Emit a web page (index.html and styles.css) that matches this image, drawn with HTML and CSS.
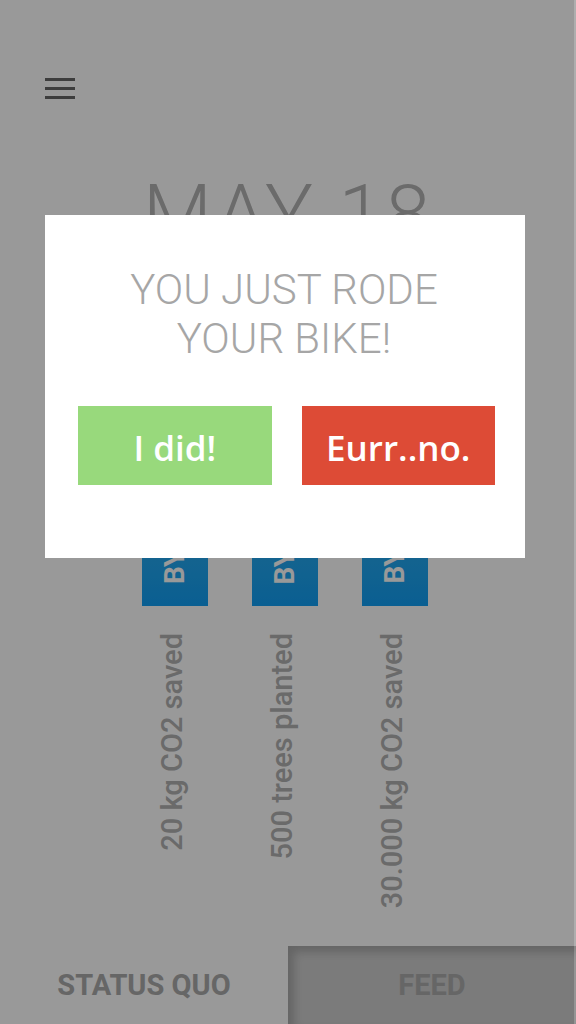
FILE: index.html
```html
<!DOCTYPE html>
<html lang="en">
<head>
    <meta charset="UTF-8">
    <meta name="viewport" content="width=device-width, initial-scale=1.0">
    <title>Bike Tracker</title>
    <link rel="stylesheet" href="styles.css">
</head>
<body>
    <div class="app">
        <header class="top">
            <div class="menu">
                <span></span><span></span><span></span>
            </div>
        </header>
        <h1 class="date">MAY 18</h1>

        <div class="stats">
            <div class="stat">
                <div class="bar"><span>BY BIKE</span></div>
                <div class="label">20 kg CO2 saved</div>
            </div>
            <div class="stat">
                <div class="bar"><span>BY TREE</span></div>
                <div class="label">500 trees planted</div>
            </div>
            <div class="stat">
                <div class="bar"><span>BY ALL</span></div>
                <div class="label">30.000 kg CO2 saved</div>
            </div>
        </div>

        <nav class="tabs">
            <div class="tab">STATUS QUO</div>
            <div class="tab tab-off">FEED</div>
        </nav>
    </div>

    <!-- popup -->
    <div class="overlay">
        <div class="modal">
            <h2 class="modal-title">YOU JUST RODE<br>YOUR BIKE!</h2>
            <div class="actions">
                <button class="btn btn-yes">I did!</button>
                <button class="btn btn-no">Eurr..no.</button>
            </div>
        </div>
    </div>
</body>
</html>
```

FILE: styles.css
```css
body {
    margin: 0;
    padding: 0;
    background: #fff;
    font-family: Roboto, "Liberation Sans", sans-serif;
    overflow: hidden;
}
.app {
    height: 1024px;
    display: flex;
    flex-direction: column;
}
.top {
    padding: 78px 45px 0;
}
.menu {
    width: 30px;
    display: flex;
    flex-direction: column;
    gap: 6px;
}
.menu span {
    display: block;
    height: 3px;
    background: #666;
}
.date {
    margin: 75px 0 0;
    text-align: center;
    font-size: 80px;
    line-height: 80px;
    font-weight: 300;
    letter-spacing: 3px;
    color: #b2b2b2;
}
.stats {
    margin-top: 202px;
    padding-left: 142px;
    display: flex;
    gap: 44px;
    align-items: flex-start;
}
.stat {
    width: 66px;
    display: flex;
    flex-direction: column;
    align-items: center;
}
.bar {
    width: 66px;
    height: 150px;
    background: linear-gradient(to bottom, #46b7e6, #119ef3);
    display: flex;
    justify-content: center;
    align-items: flex-end;
    overflow: hidden;
}
.bar span {
    writing-mode: vertical-rl;
    transform: rotate(180deg);
    color: #fff;
    font-size: 28px;
    font-weight: 700;
    line-height: 1;
    padding-top: 22px;
    white-space: nowrap;
}
.label {
    margin-top: 27px;
    margin-right: 6px;
    writing-mode: vertical-rl;
    transform: rotate(180deg);
    font-size: 29px;
    font-weight: 500;
    line-height: 1.2;
    color: #b1b1b1;
    white-space: nowrap;
}
.tabs {
    margin-top: auto;
    height: 78px;
    display: flex;
}
.tab {
    flex: 1;
    display: flex;
    justify-content: center;
    align-items: center;
    font-size: 29px;
    font-weight: 700;
    color: #aaa;
}
.tab-off {
    background: #cdcdcd;
    box-shadow: inset 6px 6px 8px rgba(0, 0, 0, 0.18);
}
.overlay {
    position: fixed;
    top: 0;
    left: 0;
    right: 0;
    bottom: 0;
    background: rgba(0, 0, 0, 0.4);
    border-right: 2px solid rgba(255, 255, 255, 0.2);
}
.modal {
    margin: 215px 0 0 45px;
    width: 480px;
    box-sizing: border-box;
    padding: 50px 30px 73px 33px;
    background: #fff;
}
.modal-title {
    margin: 0;
    padding-right: 5px;
    text-align: center;
    font-size: 42px;
    line-height: 49px;
    font-weight: 300;
    color: #a6a6a6;
}
.actions {
    margin-top: 43px;
    display: flex;
    gap: 30px;
}
.btn {
    width: 194px;
    height: 79px;
    border: none;
    border-radius: 0;
    padding: 4px 0 0;
    font-family: "Open Sans", sans-serif;
    font-size: 35px;
    font-weight: 600;
    color: #fff;
    cursor: pointer;
}
.btn-yes {
    background: #98d97c;
}
.btn-no {
    background: #dd4b36;
}
```
